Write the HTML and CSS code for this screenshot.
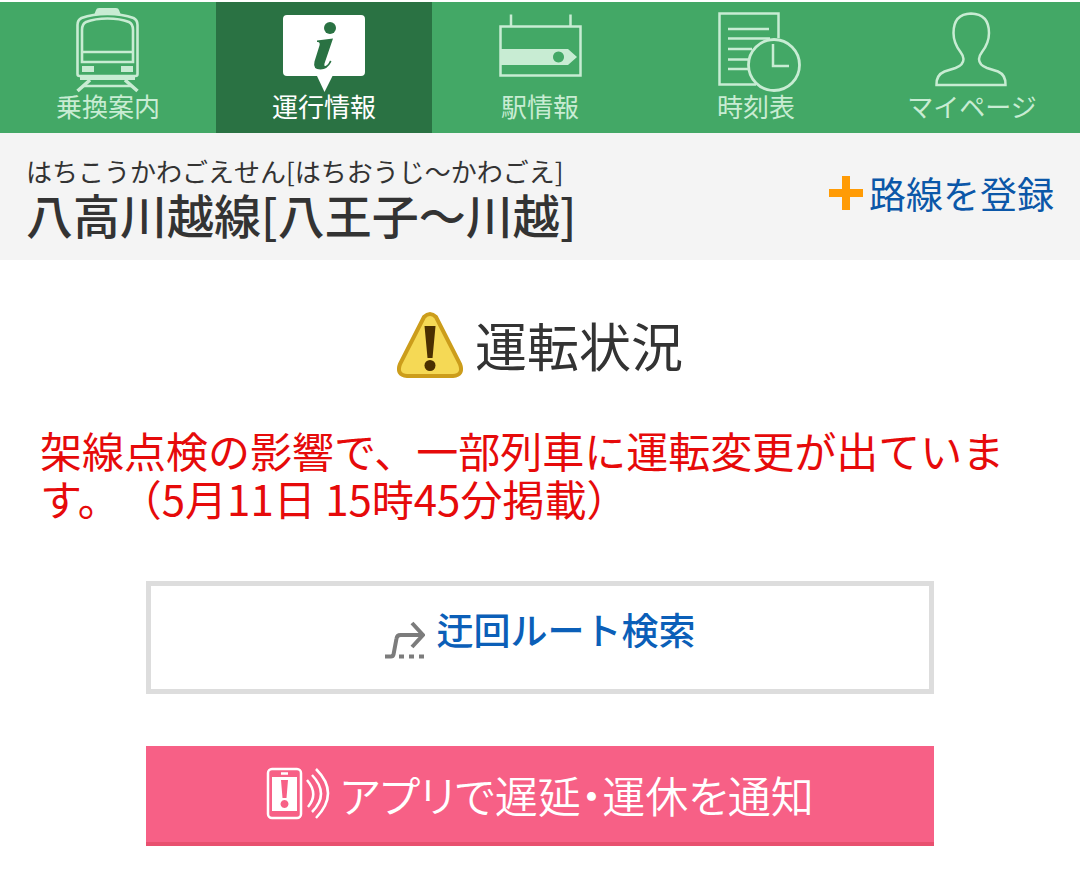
FILE: index.html
```html
<!DOCTYPE html>
<html lang="ja">
<head>
<meta charset="utf-8">
<meta name="viewport" content="width=device-width">
<title>八高川越線[八王子〜川越] 運行情報</title>
<link rel="stylesheet" href="styles.css">
</head>
<body>
<nav class="tabs">
  <a class="tab" href="#route">
    <svg class="tab-icon" viewBox="58 4 100 90" aria-hidden="true">
      <path class="fill" d="M94 15l2-5q.5-2 3-2h17q2.500 0 3 2l2 5z"/>
      <path class="line" stroke-width="2.600" d="M77.500 74V25q0-5 4-7 11-4 26-4t26 4q4 2 4 7v49q0 2-2 2h-56q-2 0-2-2z"/>
      <path class="line" stroke-width="2.600" d="M82 62V30q0-6 4-8 9-3.500 21.500-3.500T129 22q4 2 4 8v32zM82 52h51"/>
      <path class="fill" d="M82 66h12v6H82zM121 66h12v6h-12zM80 75h55v5H80z"/>
      <path class="line" stroke-width="3.600" d="M90 80L77.500 91M125 80l12.500 11"/>
      <path class="line" stroke-width="2.400" d="M84 86h48"/>
    </svg>
    <span>乗換案内</span>
  </a>
  <a class="tab tab-active" href="#status" aria-current="page">
    <svg class="tab-icon" viewBox="58 4 100 90" aria-hidden="true">
      <path class="fill" d="M71 15h74q4 0 4 4v53q0 4-4 4h-28.500L108.500 92 101 76H71q-4 0-4-4V19q0-4 4-4z"/>
      <circle class="mark" cx="114" cy="28" r="6"/>
      <path class="mark" d="M101 40.500l16-2-8.500 25q-.8 3 1 2.500 2.500-1 4.500-5.500l1.500 1q-4 8-11 8-8 0-6-8l5-16q1-4-2.500-3.500z"/>
    </svg>
    <span>運行情報</span>
  </a>
  <a class="tab" href="#station">
    <svg class="tab-icon" viewBox="58 4 100 90" aria-hidden="true">
      <path class="line" stroke-width="2.500" d="M68.500 26.500h80v49h-80zM79 14.500v12M138.500 14.500v12"/>
      <path class="fill" fill-rule="evenodd" d="M69 49h67l9 8-9 8H69zM126.500 51.500a5.500 5.500 0 1 0 .01 0z"/>
    </svg>
    <span>駅情報</span>
  </a>
  <a class="tab" href="#timetable">
    <svg class="tab-icon" viewBox="58 4 100 90" aria-hidden="true">
      <path class="line" stroke-width="2.500" d="M108 84.500H71.500v-71h59V38M80 29h41M80 38.500h42M80 49h24M80 59.500h20M80 69h20M125 44v22h16"/>
      <circle class="line" stroke-width="2.800" cx="126" cy="65" r="25.500"/>
    </svg>
    <span>時刻表</span>
  </a>
  <a class="tab" href="#mypage">
    <svg class="tab-icon" viewBox="58 4 100 90" aria-hidden="true">
      <path class="line" stroke-width="2.500" d="M72.500 85q-.5-10 8-13.500l11-3.500q8-3 8-9 0-3-3-7-7-9-7-19 0-19 17.500-19.500Q125 14 125 33q0 10-7 19-3 4-3 7 0 6 8 9l11 3.500q8 3.500 7.500 13.500z"/>
    </svg>
    <span>マイページ</span>
  </a>
</nav>
<header class="line-head">
  <div>
    <p class="kana">はちこうかわごえせん[はちおうじ〜かわごえ]</p>
    <h1 class="line-name">八高川越線[八王子〜川越]</h1>
  </div>
  <a class="register" href="#register">
    <svg class="plus" viewBox="0 0 34 34" aria-hidden="true"><path d="M13 0h8v13h13v8H21v13h-8V21H0v-8h13z"/></svg>
    <span>路線を登録</span>
  </a>
</header>
<main class="content">
  <h2 class="status">
    <svg class="warning" viewBox="0 0 66 66" aria-hidden="true">
      <path class="warning-sign" d="M27 5q6-6 12 0l24 47q4 11-7 12H10Q-1 63 3 52z"/>
      <path class="warning-mark" d="M27.500 14h11l-3 32h-5z"/>
      <circle class="warning-mark" cx="33" cy="53.500" r="5.500"/>
    </svg>
    <span>運転状況</span>
  </h2>
  <p class="notice">架線点検の影響で、一部列車に運転変更が出ています。（5月11日 15時45分掲載）</p>
  <a class="button detour" href="#detour">
    <svg class="detour-icon" viewBox="0 0 40 40" aria-hidden="true">
      <path d="M0 35.500h6q2 0 2.500-2l3-16q.5-3.500 4-3.500H37M27 2l11 12-11 12"/>
      <path d="M14 35.500h5M24 35.500h5M34 35.500h5"/>
    </svg>
    <span>迂回ルート検索</span>
  </a>
  <a class="button app" href="#app">
    <svg class="phone" viewBox="0 0 64 54" aria-hidden="true">
      <rect class="wave" x="2" y="2" width="33" height="49" rx="4"/>
      <path class="screen" fill-rule="evenodd" d="M6 10h25v34H6zM15 13l1.500 18h4L22 13zM18.500 33a4 4 0 1 0 .01 0z"/>
      <path class="wave" d="M15 6.500h7M41 13q12 14 1 27M46 8q18 19 0 37M50 2q24 24 0 49"/>
    </svg>
    <span>アプリで遅延・運休を通知</span>
  </a>
</main>
</body>
</html>
```

FILE: styles.css
```css
* {
  box-sizing: border-box;
}

body {
  margin: 0;
  padding-top: 2px;
  background: #fff;
  color: #333;
  font-family: "Noto Sans CJK JP", sans-serif;
}

h1,
h2,
p {
  margin: 0;
  font-weight: 400;
}

a {
  text-decoration: none;
}

svg {
  flex: none;
}

.tabs {
  display: grid;
  grid-template-columns: repeat(5, 1fr);
  background: #43a866;
}

.tab {
  display: flex;
  flex-direction: column;
  align-items: center;
  padding: 2px 0 15px;
  color: #c8ecd3;
  font-size: 26px;
  line-height: 24px;
}

.tab-active {
  background: #2a7243;
  color: #fff;
}

.tab-icon {
  width: 100px;
  height: 90px;
}

.line {
  fill: none;
  stroke: currentColor;
}

.fill {
  fill: currentColor;
}

.mark {
  fill: #2a7243;
}

.line-head {
  display: flex;
  justify-content: space-between;
  align-items: flex-start;
  padding: 22px 26px 20px;
  background: #f4f4f4;
}

.kana {
  font-size: 26px;
  line-height: 32px;
}

.line-name {
  font-size: 47px;
  font-weight: 500;
  line-height: 53px;
}

.register {
  display: flex;
  align-items: center;
  gap: 6px;
  padding-top: 16px;
  color: #0b57a8;
  font-size: 37px;
  line-height: 44px;
}

.plus {
  width: 34px;
  height: 34px;
  fill: #ff9b05;
}

.content {
  padding: 48px 40px;
}

.status {
  display: flex;
  justify-content: center;
  align-items: center;
  gap: 12px;
  font-size: 52px;
  line-height: 74px;
}

.warning {
  width: 66px;
  height: 66px;
}

.warning-sign {
  fill: #f5d955;
  stroke: #cc9d1b;
  stroke-width: 4;
}

.warning-mark {
  fill: #4a2f00;
}

.notice {
  margin-top: 44px;
  color: #e60a0a;
  font-size: 42px;
  line-height: 48px;
  text-spacing-trim: space-all;
}

.button {
  display: flex;
  justify-content: center;
  align-items: center;
  width: 788px;
  max-width: 100%;
  margin: 0 auto;
}

.detour {
  align-items: flex-start;
  gap: 12px;
  margin-top: 59px;
  padding: 18px 0 28px;
  border: 5px solid #ddd;
  color: #0b5fb8;
  font-size: 37px;
  font-weight: 500;
  line-height: 50px;
}

.detour-icon {
  width: 40px;
  height: 40px;
  margin-top: 17px;
  fill: none;
  stroke: #7c7c7c;
  stroke-width: 4;
}

.app {
  gap: 10px;
  margin-top: 52px;
  padding: 18px 0;
  border-bottom: 4px solid #e8506f;
  background: #f76086;
  color: #fff;
  font-size: 43px;
  font-weight: 350;
  font-feature-settings: "palt";
  line-height: 60px;
}

.phone {
  width: 64px;
  height: 54px;
}

.wave {
  fill: none;
  stroke: currentColor;
  stroke-width: 2.500;
}

.screen {
  fill: currentColor;
}
```
